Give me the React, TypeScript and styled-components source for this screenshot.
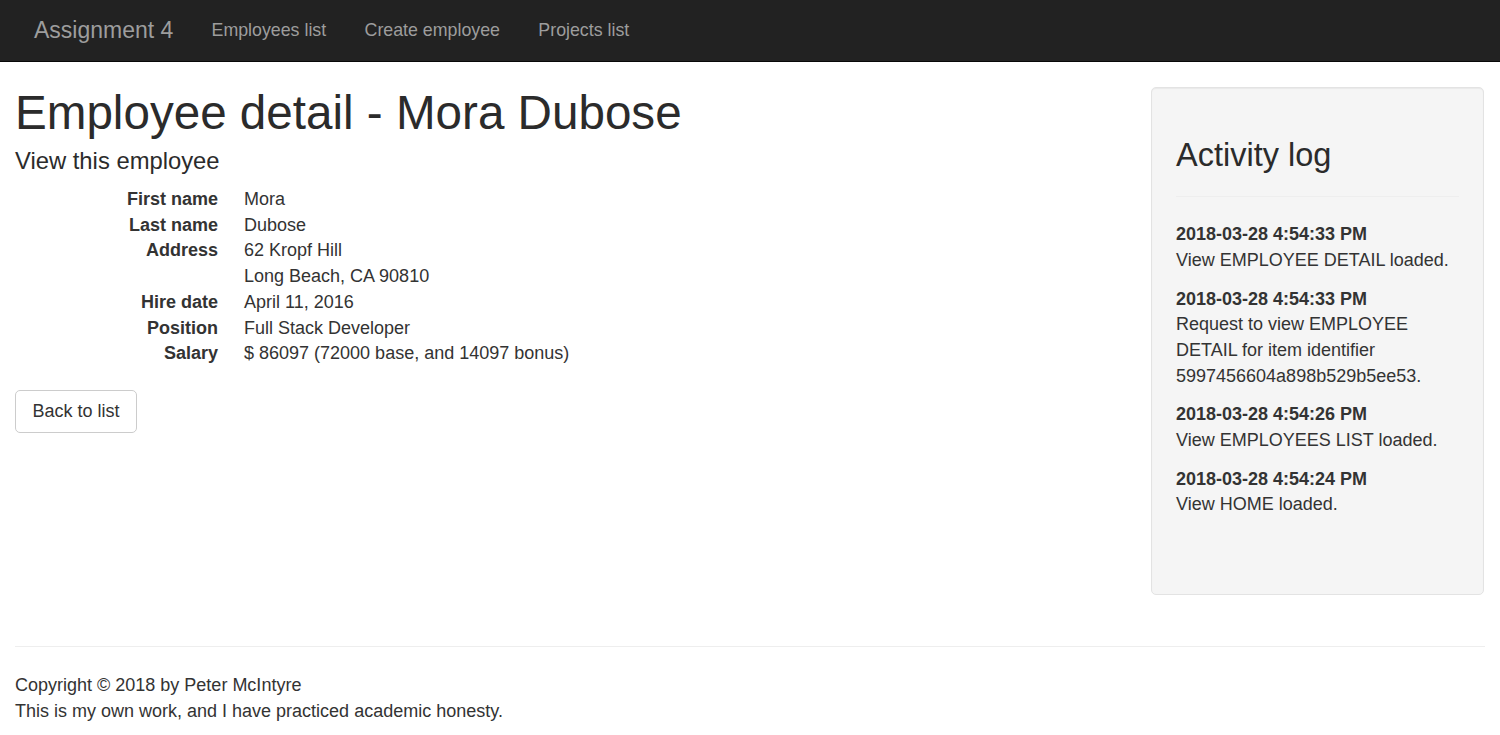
import React from 'react';
import styled, { createGlobalStyle } from 'styled-components';

const GlobalStyle = createGlobalStyle`
  * {
    box-sizing: border-box;
  }
  body {
    margin: 0;
    font-family: "Liberation Sans", Arial, Helvetica, sans-serif;
    font-size: 18px;
    line-height: 25.7px;
    color: #333;
    background: #fff;
  }
`;

const Navbar = styled.nav`
  height: 62px;
  background: #222;
  border-bottom: 1px solid #080808;
  display: flex;
  align-items: center;
  padding-left: 15px;
  margin-bottom: 25px;
`;

const Brand = styled.a`
  font-size: 23px;
  color: #9d9d9d;
  padding: 0 19px;
  text-decoration: none;
`;

const NavLink = styled.a`
  font-size: 17.8px;
  color: #9d9d9d;
  padding: 0 19.2px;
  text-decoration: none;
`;

const Container = styled.div`
  padding: 0 15px;
`;

const Row = styled.div`
  display: flex;
  align-items: flex-start;
  gap: 20px;
`;

const Main = styled.div`
  flex: 1;
`;

const Title = styled.h1`
  font-size: 47.6px;
  font-weight: 500;
  line-height: 51px;
  margin: 0 0 10px;
  color: #2b2b2b;
`;

const Subtitle = styled.h4`
  font-size: 23.8px;
  font-weight: 500;
  line-height: 26px;
  margin: 0 0 13px;
  color: #2b2b2b;
`;

const DetailList = styled.dl`
  display: grid;
  grid-template-columns: 203px 1fr;
  column-gap: 26px;
  margin: 0 0 23px;
`;

const Term = styled.dt`
  font-weight: 700;
  text-align: right;
  grid-column: 1;
`;

const Value = styled.dd`
  margin: 0;
  grid-column: 2;
`;

const Button = styled.button`
  font-family: inherit;
  font-size: 18px;
  line-height: 25.7px;
  color: #333;
  background: #fff;
  border: 1px solid #ccc;
  border-radius: 5px;
  padding: 7.7px 16.5px;
  cursor: pointer;
`;

const Sidebar = styled.aside`
  width: 333px;
  margin-right: 1px;
`;

const Well = styled.div`
  min-height: 508px;
  background: #f5f5f5;
  border: 1px solid #e3e3e3;
  border-radius: 5px;
  box-shadow: inset 0 1px 1px rgba(0, 0, 0, 0.05);
  padding: 24px;
  margin-bottom: 25.7px;
`;

const WellTitle = styled.h3`
  font-size: 32.5px;
  font-weight: 500;
  line-height: 34px;
  margin: 25.7px 0 0;
  color: #2b2b2b;
`;

const Divider = styled.hr`
  border: 0;
  border-top: 1px solid #eee;
  margin: 24px 0 25.7px;
`;

const LogEntry = styled.p`
  margin: 0 0 12.9px;
`;

const FooterRule = styled.hr`
  border: 0;
  border-top: 1px solid #eee;
  margin: 25.7px 0 25.7px;
`;

const FooterText = styled.p`
  margin: 0 0 12.9px;
`;

const details: [string, string[]][] = [
  ['First name', ['Mora']],
  ['Last name', ['Dubose']],
  ['Address', ['62 Kropf Hill', 'Long Beach, CA 90810']],
  ['Hire date', ['April 11, 2016']],
  ['Position', ['Full Stack Developer']],
  ['Salary', ['$ 86097 (72000 base, and 14097 bonus)']],
];

const log = [
  { time: '2018-03-28 4:54:33 PM', text: 'View EMPLOYEE DETAIL loaded.' },
  {
    time: '2018-03-28 4:54:33 PM',
    text: 'Request to view EMPLOYEE DETAIL for item identifier 5997456604a898b529b5ee53.',
  },
  { time: '2018-03-28 4:54:26 PM', text: 'View EMPLOYEES LIST loaded.' },
  { time: '2018-03-28 4:54:24 PM', text: 'View HOME loaded.' },
];

const App = (): JSX.Element => {
  return (
    <>
      <GlobalStyle />
      <Navbar>
        <Brand href="#">Assignment 4</Brand>
        <NavLink href="#">Employees list</NavLink>
        <NavLink href="#">Create employee</NavLink>
        <NavLink href="#">Projects list</NavLink>
      </Navbar>
      <Container>
        <Row>
          <Main>
            <Title>Employee detail - Mora Dubose</Title>
            <Subtitle>View this employee</Subtitle>
            <DetailList>
              {details.map(([label, values]) => (
                <React.Fragment key={label}>
                  <Term>{label}</Term>
                  <Value>
                    {values.map((v, i) => (
                      <div key={i}>{v}</div>
                    ))}
                  </Value>
                </React.Fragment>
              ))}
            </DetailList>
            <Button type="button">Back to list</Button>
          </Main>
          <Sidebar>
            <Well>
              <WellTitle>Activity log</WellTitle>
              <Divider />
              {log.map((entry, i) => (
                <LogEntry key={i}>
                  <strong>{entry.time}</strong>
                  <br />
                  {entry.text}
                </LogEntry>
              ))}
            </Well>
          </Sidebar>
        </Row>
        <FooterRule />
        <FooterText>
          Copyright © 2018 by Peter McIntyre
          <br />
          This is my own work, and I have practiced academic honesty.
        </FooterText>
      </Container>
    </>
  );
};

export default App;
